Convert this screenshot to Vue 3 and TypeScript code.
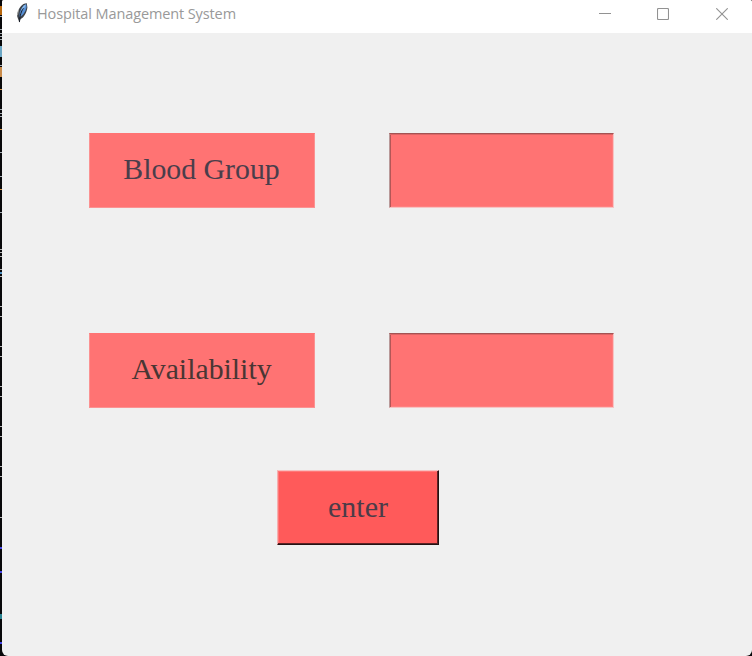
<script setup lang="ts">
import { ref } from 'vue'

interface Field {
  id: string
  label: string
  tone: string
}

interface Speck {
  y: number
  h: number
  color: string
}

const fields: Field[] = [
  { id: 'blood', label: 'Blood Group', tone: 'slate' },
  { id: 'avail', label: 'Availability', tone: 'brown' },
]
const values = ref<Record<string, string>>({ blood: '', avail: '' })

const marks = (ys: number[], color: string): Speck[] => ys.map((y) => ({ y, h: 1, color }))

const specks: Speck[] = [
  { y: 6, h: 9, color: '#b8670c' },
  { y: 46, h: 11, color: '#6ba6c4' },
  { y: 67, h: 10, color: '#c98b4a' },
  { y: 272, h: 2, color: '#4b8fc0' },
  { y: 547, h: 2, color: '#4545e8' },
  { y: 571, h: 2, color: '#4545e8' },
  { y: 614, h: 5, color: '#2a8290' },
  { y: 642, h: 2, color: '#4545e8' },
  ...marks([16, 29, 33, 36, 39, 65, 109, 113, 116, 152, 176, 212], '#a5adb3'),
  ...marks([89, 129, 189], '#d69a50'),
  ...marks([249, 252, 256, 269, 276, 306, 316, 346, 356, 386, 396, 426, 436, 466, 476, 517], '#b5b5b5'),
]
</script>

<template>
  <div class="desktop">
    <span
      v-for="(s, i) in specks"
      :key="i"
      class="speck"
      :style="{ top: s.y + 'px', height: s.h + 'px', background: s.color }"
    ></span>
    <main class="window">
      <header class="titlebar">
        <svg class="feather" width="14" height="23" viewBox="0 0 14 23">
          <path d="M11.8 3.2C8.5 3 5.4 6 3.8 9.5 2.2 12.8 1.5 15.8 2.9 18.6L4.4 22.4 5.6 19.1C9.4 17.4 11.8 12 12.4 7.5Z" fill="#3c4148" />
          <path d="M11.2 4C8.3 5 6.1 8.5 4.8 12.2L4.5 17.2C8.2 15.6 10.6 11.3 11.6 7Z" fill="#5790d6" />
          <path d="M10.6 4.4C8.5 5.4 6.5 8.2 6 10.5L10 7Z" fill="#8dbbeb" />
          <path d="M8.4 8.3C6.3 11.4 5 14.6 4.4 22" fill="none" stroke="#171c26" stroke-width="1" />
          <path d="M3.6 9.8 2.5 15" stroke="#a9aaa7" stroke-width=".9" />
        </svg>
        <span class="title">Hospital Management System</span>
        <div class="controls">
          <svg width="12" height="12" viewBox="0 0 12 12"><path d="M0 5.5H12" /></svg>
          <svg width="12" height="12" viewBox="0 0 12 12"><rect x=".5" y=".5" width="11" height="11" rx="1" /></svg>
          <svg width="12" height="12" viewBox="0 0 12 12"><path d="M.3.3 11.7 11.7M11.7.3.3 11.7" /></svg>
        </div>
      </header>
      <form class="form" @submit.prevent>
        <div v-for="f in fields" :key="f.id" class="row">
          <label :for="f.id" class="label" :class="f.tone">{{ f.label }}</label>
          <input :id="f.id" v-model="values[f.id]" class="entry" type="text" autocomplete="off" />
        </div>
        <button class="enter" type="submit">enter</button>
      </form>
    </main>
  </div>
</template>

<style>
body {
  margin: 0;
  overflow: hidden;
}
</style>

<style scoped>
.desktop {
  position: relative;
  box-sizing: border-box;
  width: 752px;
  height: 656px;
  padding-left: 2px;
  background: #08080a;
  overflow: hidden;
}
.speck {
  position: absolute;
  left: 0;
  width: 2px;
}
.window {
  position: relative;
  height: 656px;
  background: #f0f0f0;
  border-radius: 2px 2px 6px 6px;
  overflow: hidden;
}
.titlebar {
  display: flex;
  height: 33px;
  background: #fff;
}
.feather {
  margin-left: 13px;
}
.title {
  margin-left: 8px;
  font: 14.5px/28px "Open Sans", "Noto Sans", sans-serif;
  letter-spacing: -0.11px;
  color: #999;
  white-space: nowrap;
}
.controls {
  display: flex;
  margin-left: auto;
  padding: 8px 24px 0 0;
}
.controls svg {
  fill: none;
  stroke: #929292;
  stroke-width: 1.1;
}
.controls svg:nth-child(2) {
  margin: 0 47px 0 46px;
}
.form {
  display: flex;
  flex-direction: column;
  padding-top: 100px;
}
.row {
  display: flex;
  gap: 74px;
  height: 75px;
  margin: 0 0 125px 87px;
}
.row:nth-of-type(2) {
  margin-bottom: 62px;
}
.label {
  box-sizing: border-box;
  width: 226px;
  height: 75px;
  padding-right: 1px;
  border: 1px solid #fb9292;
  border-top-color: #ff7373;
  background: #ff7373;
  font: 29.8px/69px "Liberation Serif", "Times New Roman", serif;
  text-align: center;
}
.slate {
  color: #4a3e4b;
}
.brown {
  color: #493634;
}
.entry {
  box-sizing: border-box;
  width: 225px;
  height: 75px;
  margin: 0;
  padding: 0 8px;
  border: 1px solid;
  border-color: #a45353 #f7c4c4 #f7c4c4 #b99a9a;
  border-radius: 0;
  outline: none;
  background: #ff7373;
  box-shadow: inset 0 1px #dc6565, inset 1px 0 #b45656, inset -1px -1px #ff8080;
  font: 30px "Liberation Serif", "Times New Roman", serif;
  color: #4a3e4b;
}
.enter {
  box-sizing: border-box;
  width: 162px;
  height: 75px;
  margin: 0 0 0 275px;
  padding: 0 0 1px;
  border: 1px solid;
  border-color: #f7c0c0 #241314 #241314 #f5b0b0;
  border-radius: 0;
  background: #ff5a5a;
  box-shadow: inset -1px -1px #5c2224, inset 1px 1px #ff7777;
  font: 30px/70px "Liberation Serif", "Times New Roman", serif;
  color: #4b3c48;
}
</style>
